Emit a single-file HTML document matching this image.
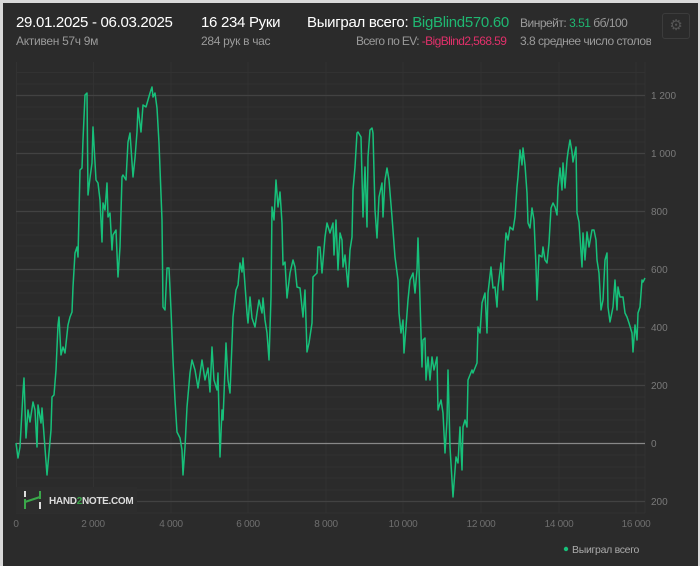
<!DOCTYPE html>
<html><head><meta charset="utf-8"><style>
html,body{margin:0;padding:0;width:700px;height:566px;overflow:hidden;background:#d9d9d9;font-family:"Liberation Sans",sans-serif}
.p{position:absolute;left:3px;top:3px;width:695px;height:563px;background:#2b2b2b}
.t{position:absolute;white-space:nowrap;letter-spacing:-0.3px}
</style></head><body>
<div class="p"></div>
<div class="t" style="left:16px;top:14px;font-size:15px;color:#fff">29.01.2025 - 06.03.2025</div>
<div class="t" style="left:16px;top:34px;font-size:12px;color:#9a9a9a">Активен 57ч 9м</div>
<div class="t" style="left:201px;top:14px;font-size:15px;color:#fff">16 234 Руки</div>
<div class="t" style="left:201px;top:34px;font-size:12px;color:#9a9a9a">284 рук в час</div>
<div class="t" style="left:307px;top:14px;font-size:15px;color:#fff">Выиграл всего: <span style="color:#1fb872">BigBlind570.60</span></div>
<div class="t" style="left:356px;top:34px;font-size:12px;color:#9a9a9a;letter-spacing:-0.6px">Всего по EV: <span style="color:#e0306a">-BigBlind2,568.59</span></div>
<div class="t" style="left:520px;top:16px;font-size:12px;color:#9a9a9a;letter-spacing:-0.5px">Винрейт: <span style="color:#1fb872">3.51</span> бб/100</div>
<div class="t" style="left:520px;top:34px;font-size:12px;color:#9a9a9a;width:131px;overflow:hidden;letter-spacing:-0.5px">3.8 среднее число столов</div>
<div class="t" style="left:662px;top:13px;width:26px;height:24px;border:1px solid #3c3c3c;border-radius:3px;color:#555;font-size:15px;text-align:center;line-height:24px">⚙</div>
<svg style="position:absolute;left:0;top:0" width="700" height="566">
<g stroke="#323232" stroke-width="1">
<line x1="16" y1="72.5" x2="645" y2="72.5"/><line x1="16" y1="84" x2="645" y2="84"/><line x1="16" y1="107" x2="645" y2="107"/><line x1="16" y1="119" x2="645" y2="119"/><line x1="16" y1="130" x2="645" y2="130"/><line x1="16" y1="142" x2="645" y2="142"/><line x1="16" y1="165" x2="645" y2="165"/><line x1="16" y1="177" x2="645" y2="177"/><line x1="16" y1="188" x2="645" y2="188"/><line x1="16" y1="200" x2="645" y2="200"/><line x1="16" y1="223" x2="645" y2="223"/><line x1="16" y1="235" x2="645" y2="235"/><line x1="16" y1="246" x2="645" y2="246"/><line x1="16" y1="258" x2="645" y2="258"/><line x1="16" y1="281" x2="645" y2="281"/><line x1="16" y1="293" x2="645" y2="293"/><line x1="16" y1="304" x2="645" y2="304"/><line x1="16" y1="316" x2="645" y2="316"/><line x1="16" y1="339" x2="645" y2="339"/><line x1="16" y1="351" x2="645" y2="351"/><line x1="16" y1="362" x2="645" y2="362"/><line x1="16" y1="374" x2="645" y2="374"/><line x1="16" y1="397" x2="645" y2="397"/><line x1="16" y1="409" x2="645" y2="409"/><line x1="16" y1="420" x2="645" y2="420"/><line x1="16" y1="432" x2="645" y2="432"/><line x1="16" y1="455" x2="645" y2="455"/><line x1="16" y1="467" x2="645" y2="467"/><line x1="16" y1="478" x2="645" y2="478"/><line x1="16" y1="490" x2="645" y2="490"/><line x1="16" y1="513" x2="645" y2="513"/>
<line x1="16.5" y1="62" x2="16.5" y2="513"/><line x1="93.5" y1="62" x2="93.5" y2="513"/><line x1="171" y1="62" x2="171" y2="513"/><line x1="248" y1="62" x2="248" y2="513"/><line x1="326" y1="62" x2="326" y2="513"/><line x1="403" y1="62" x2="403" y2="513"/><line x1="481" y1="62" x2="481" y2="513"/><line x1="559" y1="62" x2="559" y2="513"/><line x1="636" y1="62" x2="636" y2="513"/><line x1="645" y1="62" x2="645" y2="513"/>
</g>
<g stroke="#424242" stroke-width="1.3">
<line x1="16" y1="95.5" x2="645" y2="95.5"/><line x1="16" y1="153.5" x2="645" y2="153.5"/><line x1="16" y1="211.5" x2="645" y2="211.5"/><line x1="16" y1="269.5" x2="645" y2="269.5"/><line x1="16" y1="327.5" x2="645" y2="327.5"/><line x1="16" y1="385.5" x2="645" y2="385.5"/><line x1="16" y1="501.5" x2="645" y2="501.5"/>
</g>
<line x1="16" y1="443.5" x2="645" y2="443.5" stroke="#888" stroke-width="1.3"/>
<g font-size="10" fill="#7a7a7a">
<text x="651" y="99">1 200</text><text x="651" y="157">1 000</text><text x="651" y="215">800</text><text x="651" y="273">600</text><text x="651" y="331">400</text><text x="651" y="389">200</text><text x="651" y="447">0</text><text x="651" y="505">200</text>
</g>
<g font-size="10" fill="#6e6e6e" text-anchor="middle" letter-spacing="-0.3">
<text x="16" y="527">0</text><text x="93" y="527">2 000</text><text x="171" y="527">4 000</text><text x="248" y="527">6 000</text><text x="326" y="527">8 000</text><text x="403" y="527">10 000</text><text x="481" y="527">12 000</text><text x="559" y="527">14 000</text><text x="636" y="527">16 000</text>
</g>
<rect x="16" y="487" width="121" height="26" fill="#2d2d2d"/>
<g stroke-width="2">
<line x1="25" y1="491" x2="25" y2="497" stroke="#ddd"/><line x1="25" y1="499" x2="25" y2="509" stroke="#3aa84a"/>
<line x1="40" y1="491" x2="40" y2="499" stroke="#3aa84a"/><line x1="40" y1="502" x2="40" y2="509" stroke="#ddd"/>
<line x1="25" y1="502" x2="40" y2="497" stroke="#3aa84a"/>
</g>
<text x="49" y="504" font-size="10" font-weight="bold" fill="#ddd" letter-spacing="-0.3">HAND<tspan fill="#3aa84a">2</tspan>NOTE.COM</text>
<polyline fill="none" stroke="#17c07a" stroke-width="1.5" stroke-linejoin="round" points="16,443 18,458 20,447 23,392 24,378 26,438 28,410 30,422 33,402 35,410 37,447 38,405 41,423 42,408 47,475 51,430 52,397 54,395 56,370 58,325 59,317 61,355 63,347 65,353 68,325 70,317 72,312 73,287 75,253 77,247 78,257 80,170 82,168 83,140 85,95 87,93 88,195 90,178 92,163 93,127 96,180 98,183 100,200 102,242 103,203 105,210 107,183 108,217 110,213 112,250 113,235 116,230 118,277 120,247 122,177 123,175 126,180 128,142 130,133 133,177 135,158 137,132 138,108 141,132 143,105 146,107 148,100 150,93 152,87 153,97 155,93 157,108 159,143 162,220 163,307 165,310 167,268 169,268 171,310 173,360 175,400 177,432 180,438 182,450 183,475 185,447 187,407 190,373 192,360 195,370 198,388 202,360 205,380 208,368 210,392 212,347 214,380 217,390 218,373 220,457 222,410 223,420 226,343 228,380 230,393 232,343 233,317 236,290 238,285 240,263 242,272 243,258 245,285 247,313 248,323 250,297 252,318 255,327 257,313 259,300 262,313 263,298 265,320 267,333 269,360 271,297 272,207 274,220 276,180 278,207 280,192 282,223 283,265 285,262 287,298 290,273 293,260 295,267 297,287 300,288 303,317 305,290 307,352 309,343 312,323 313,277 317,273 318,247 320,247 322,273 325,237 327,223 330,233 333,223 334,255 336,220 338,270 340,233 342,240 343,267 345,255 348,287 350,250 352,237 353,190 355,167 357,133 358,132 361,137 363,217 365,167 367,227 368,157 370,130 372,128 373,133 375,210 377,238 379,197 382,183 383,217 385,180 387,168 389,180 392,217 395,257 398,280 399,313 401,333 403,320 404,353 406,327 408,300 410,280 413,273 415,293 417,270 418,238 420,300 422,367 423,340 425,338 426,380 428,357 430,380 432,357 434,370 437,357 438,410 441,400 443,413 445,453 447,420 448,370 450,447 453,497 456,457 458,463 460,427 462,470 463,427 465,420 467,427 468,380 472,370 473,373 477,363 478,327 480,333 482,303 485,293 487,333 488,293 491,267 493,288 495,287 497,307 498,287 501,263 503,290 504,263 506,233 508,240 510,227 513,230 515,217 517,187 518,177 520,150 522,165 523,148 525,165 527,193 528,223 530,228 532,208 534,220 536,267 537,300 539,255 542,257 543,247 545,260 547,263 549,243 551,208 553,203 555,207 557,215 558,187 560,168 562,190 563,163 565,188 567,160 568,152 570,140 572,152 573,162 576,147 577,213 579,222 582,267 583,233 585,260 587,232 589,247 592,230 594,230 596,240 597,260 599,273 601,310 603,300 605,260 607,253 608,307 610,322 613,307 615,280 617,310 618,287 620,297 623,297 625,313 627,317 629,323 632,333 633,352 635,325 637,340 638,313 640,307 642,280 643,282 645,278"/>
<circle cx="566" cy="549" r="2.2" fill="#17c07a"/>
<text x="572" y="553" font-size="10.5" fill="#aaa" letter-spacing="-0.3">Выиграл всего</text>
</svg>
</body></html>
